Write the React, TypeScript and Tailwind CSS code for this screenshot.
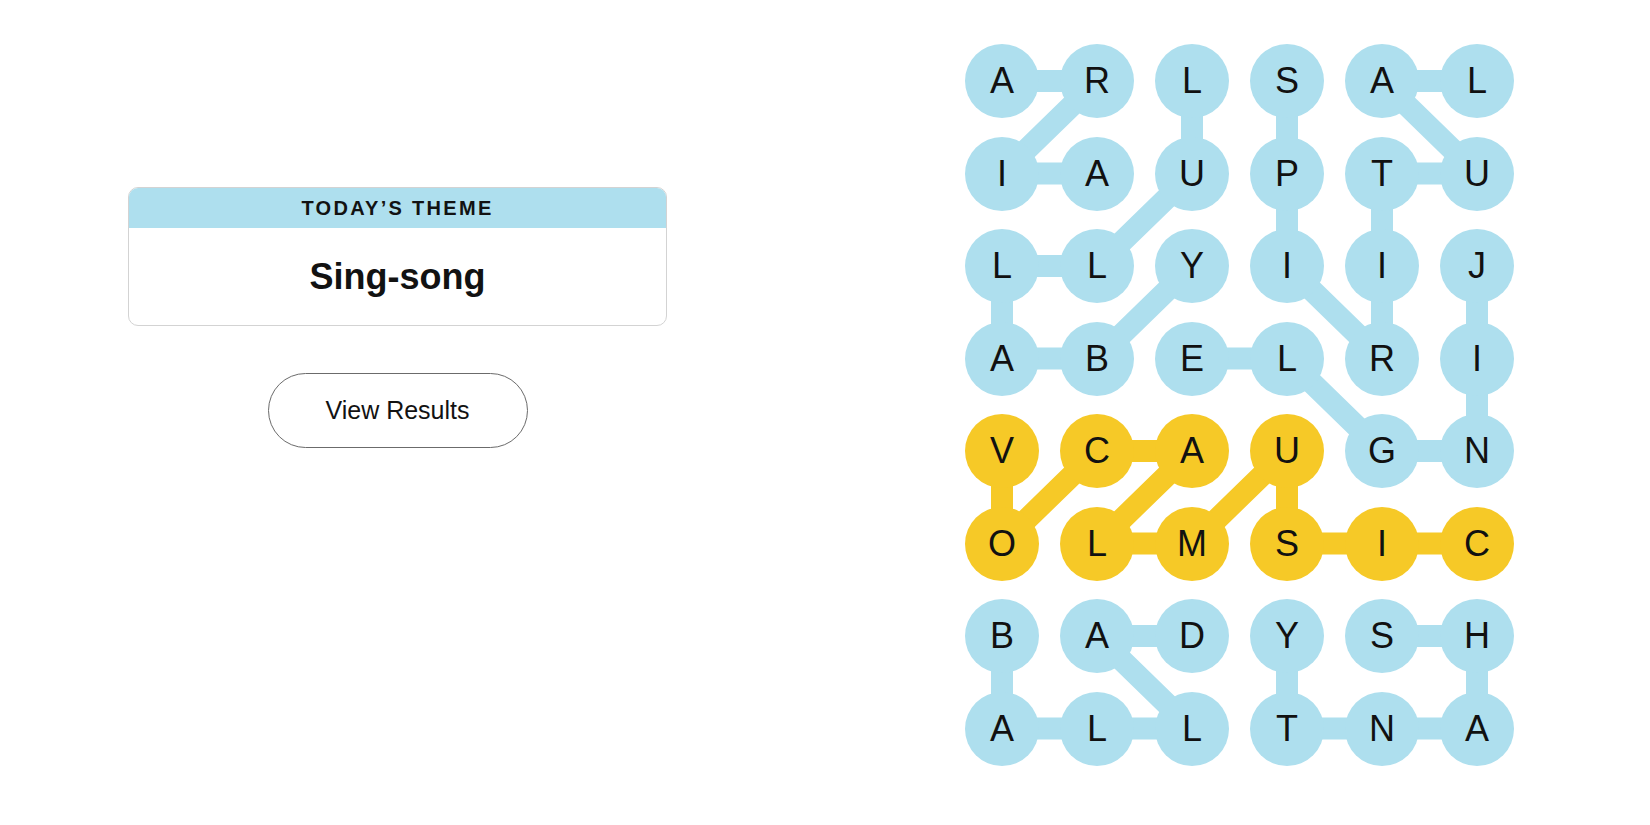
const LETTERS = [
  'ARLSAL',
  'IAUPTU',
  'LLYIIJ',
  'ABELRI',
  'VCAUGN',
  'OLMSIC',
  'BADYSH',
  'ALLTNA',
]

type Cell = [number, number]

const BLUE = '#aedfee'
const YELLOW = '#f6c927'

const words: { path: Cell[]; spangram?: boolean }[] = [
  { path: [[0, 0], [0, 1], [1, 0], [1, 1]] },
  { path: [[0, 2], [1, 2], [2, 1], [2, 0], [3, 0], [3, 1], [2, 2]] },
  { path: [[0, 3], [1, 3], [2, 3], [3, 4], [2, 4], [1, 4], [1, 5], [0, 4], [0, 5]] },
  { path: [[2, 5], [3, 5], [4, 5], [4, 4], [3, 3], [3, 2]] },
  {
    path: [[4, 0], [5, 0], [4, 1], [4, 2], [5, 1], [5, 2], [4, 3], [5, 3], [5, 4], [5, 5]],
    spangram: true,
  },
  { path: [[6, 0], [7, 0], [7, 1], [7, 2], [6, 1], [6, 2]] },
  { path: [[6, 4], [6, 5], [7, 5], [7, 4], [7, 3], [6, 3]] },
]

// circle 74px, column pitch 95px, row pitch 92.5px
const cx = (c: number) => 37 + c * 95
const cy = (r: number) => 37 + r * 92.5

const spangramCells = new Set(
  words.filter((w) => w.spangram).flatMap((w) => w.path.map(([r, c]) => `${r}-${c}`))
)

function Board() {
  return (
    <div className="relative">
      <svg className="absolute inset-0" width={549} height={722} aria-hidden="true">
        {words.map((w, i) => (
          <polyline
            key={i}
            points={w.path.map(([r, c]) => `${cx(c)},${cy(r)}`).join(' ')}
            fill="none"
            stroke={w.spangram ? YELLOW : BLUE}
            strokeWidth={22}
            strokeLinejoin="round"
          />
        ))}
      </svg>
      <div className="relative grid grid-cols-[repeat(6,74px)] gap-x-[21px] gap-y-[18.5px]">
        {LETTERS.flatMap((row, r) =>
          row.split('').map((ch, c) => (
            <div
              key={`${r}-${c}`}
              className={
                'w-[74px] h-[74px] rounded-full flex items-center justify-center text-[36px] leading-none text-[#111] font-["Liberation_Sans",Arial,sans-serif] ' +
                (spangramCells.has(`${r}-${c}`) ? 'bg-[#f6c927]' : 'bg-[#aedfee]')
              }
            >
              {ch}
            </div>
          ))
        )}
      </div>
    </div>
  )
}

export default function App() {
  return (
    <div className="flex w-full min-h-screen bg-white text-[#121212] font-['Liberation_Sans',Arial,sans-serif]">
      <div className="ml-[128px] mt-[187px] w-[539px] flex flex-col items-center">
        <div className="w-full rounded-[10px] border border-[#d3d3d3] overflow-hidden">
          <div className="h-[40px] bg-[#aedfee] flex items-center justify-center text-[20px] font-bold tracking-[2.3px] uppercase">
            Today’s Theme
          </div>
          <div className="h-[97px] flex items-center justify-center text-[36px] font-bold">
            Sing-song
          </div>
        </div>
        <button
          type="button"
          className="mt-[47px] w-[260px] h-[75px] rounded-full border-[1.5px] border-[#6b6b6b] bg-white text-[25px] text-[#121212]"
        >
          View Results
        </button>
      </div>
      <div className="ml-[298px] mt-[44px]">
        <Board />
      </div>
    </div>
  )
}
